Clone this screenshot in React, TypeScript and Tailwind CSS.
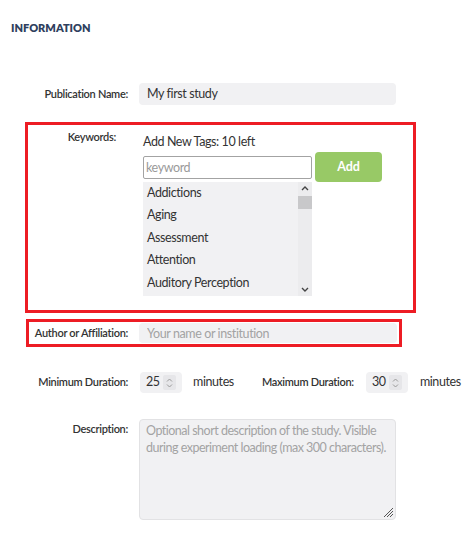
import React from "react"

const keywords = ["Addictions", "Aging", "Assessment", "Attention", "Auditory Perception"]

function Spinner() {
  return (
    <div className="flex h-[15px] w-[13px] flex-col items-center justify-center rounded-[2px] bg-[#e6e6e9]">
      <svg width="7" height="12" viewBox="0 0 7 12" fill="none" stroke="#9a9a9a" strokeWidth="1">
        <path d="M1 4.5 L3.5 2 L6 4.5" />
        <path d="M1 7.5 L3.5 10 L6 7.5" />
      </svg>
    </div>
  )
}

function NumberBox({ value }: { value: string }) {
  return (
    <div className="flex h-[21px] w-[42px] items-center rounded-[4px] bg-[#f1f1f3] pl-[6px] pr-[6px]">
      <span className="flex-1 text-[12.5px] tracking-[-0.4px] text-[#333]">{value}</span>
      <Spinner />
    </div>
  )
}

export default function App() {
  return (
    <div className="relative h-[538px] w-[473px] overflow-hidden bg-white font-['Lato','Noto_Sans',sans-serif] text-[#333]">
      <div className="pl-[11px] pt-[22px] text-[11px] font-extrabold uppercase leading-[12px] text-[#2f3f5e]">
        Information
      </div>

      {/* publication name */}
      <div className="mt-[49px] flex items-center">
        <label className="w-[128px] whitespace-nowrap text-right text-[11px] font-semibold tracking-[-0.3px]">Publication Name:</label>
        <div className="ml-[11px] flex h-[22px] w-[257px] items-center rounded-[4px] bg-[#f1f1f3] px-[8px] text-[12.5px] tracking-[-0.4px]">
          My first study
        </div>
      </div>

      {/* keywords */}
      <div className="ml-[25px] mt-[17px] flex h-[191px] w-[391px] border-[3px] border-[#ed1c24]">
        <label className="w-[88px] pt-[5px] text-right text-[11px] font-semibold leading-[14px] tracking-[-0.3px]">Keywords:</label>
        <div className="ml-[27px] flex flex-col pt-[9px]">
          <div className="text-[12.5px] leading-[16px] tracking-[-0.4px]">Add New Tags: 10 left</div>
          <div className="mt-[2px] flex h-[30px] items-center">
            <input
              readOnly
              placeholder="keyword"
              className="h-[23px] w-[169px] rounded-[2px] border border-[#a3a3a3] bg-white px-[2px] text-[12.5px] tracking-[-0.4px] outline-none placeholder:text-[#9a9a9a]"
            />
            <button className="ml-[3px] h-[30px] w-[67px] rounded-[4px] bg-[#98c966] text-[12.5px] font-bold text-white">
              Add
            </button>
          </div>
          <div className="flex h-[114px] w-[169px] overflow-hidden bg-[#f1f1f3]">
            <ul className="flex-1">
              {keywords.map(k => (
                <li key={k} className="pl-[4px] text-[12.5px] leading-[22.4px] tracking-[-0.4px] text-[#333]">{k}</li>
              ))}
            </ul>
            <div className="flex w-[14px] flex-col items-center bg-[#ececee]">
              <svg width="14" height="14" viewBox="0 0 14 14" fill="none" stroke="#444" strokeWidth="1.4">
                <path d="M4 8 L7 5 L10 8" />
              </svg>
              <div className="h-[13px] w-[14px] bg-[#c8c8ca]" />
              <div className="flex-1" />
              <svg width="14" height="14" viewBox="0 0 14 14" fill="none" stroke="#444" strokeWidth="1.4">
                <path d="M4 6 L7 9 L10 6" />
              </svg>
            </div>
          </div>
        </div>
      </div>

      {/* author */}
      <div className="ml-[26px] mt-[6px] flex h-[28px] w-[376px] items-center border-[3px] border-[#ed1c24]">
        <label className="w-[99px] whitespace-nowrap text-right text-[11px] font-semibold tracking-[-0.3px]">Author or Affiliation:</label>
        <input
          readOnly
          placeholder="Your name or institution"
          className="ml-[11px] h-[20px] w-[258px] rounded-[4px] bg-[#f1f1f3] px-[8px] text-[12.5px] tracking-[-0.4px] outline-none placeholder:text-[#a3a3a3]"
        />
      </div>

      {/* durations */}
      <div className="mt-[25px] flex items-center">
        <label className="w-[128px] whitespace-nowrap text-right text-[11px] font-semibold tracking-[-0.3px]">Minimum Duration:</label>
        <div className="ml-[12px]"><NumberBox value="25" /></div>
        <span className="ml-[11px] text-[12.5px] tracking-[-0.4px]">minutes</span>
        <label className="ml-[28px] whitespace-nowrap text-[11px] font-semibold tracking-[-0.3px]">Maximum Duration:</label>
        <div className="ml-[12px]"><NumberBox value="30" /></div>
        <span className="ml-[12px] text-[12.5px] tracking-[-0.4px]">minutes</span>
      </div>

      {/* description */}
      <div className="mt-[26px] flex items-start">
        <label className="w-[128px] pt-[2px] text-right text-[11px] font-semibold tracking-[-0.3px]">Description:</label>
        <div className="relative ml-[11px] h-[101px] w-[257px] rounded-[4px] border border-[#e2e2e4] bg-[#f1f1f3] pl-[6px] pr-[2px] pt-[3px] text-[12.5px] leading-[16.7px] tracking-[-0.5px] text-[#a3a3a3]">
          Optional short description of the study. Visible during experiment loading (max 300 characters).
          <svg className="absolute bottom-[1px] right-[1px]" width="11" height="11" viewBox="0 0 11 11" stroke="#555" strokeWidth="1">
            <path d="M10 1 L1 10 M10 4 L4 10 M10 7 L7 10" />
          </svg>
        </div>
      </div>
    </div>
  )
}
